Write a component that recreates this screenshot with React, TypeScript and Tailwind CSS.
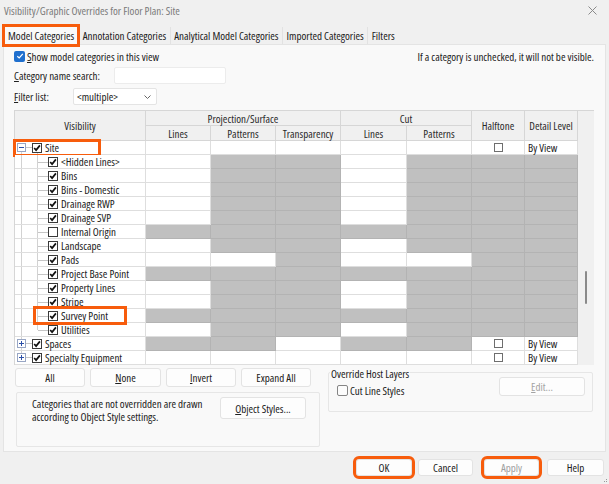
import React from "react";

type Row = {
  name: string;
  root: boolean;
  checked: boolean;
  plus?: boolean;
  cells: string;
  opts: boolean;
};

const rows: Row[] = [
  { name: "Site", root: true, checked: true, cells: "wwwww", opts: true },
  { name: "<Hidden Lines>", root: false, checked: true, cells: "wggwg", opts: false },
  { name: "Bins", root: false, checked: true, cells: "wggwg", opts: false },
  { name: "Bins - Domestic", root: false, checked: true, cells: "wggwg", opts: false },
  { name: "Drainage RWP", root: false, checked: true, cells: "wggwg", opts: false },
  { name: "Drainage SVP", root: false, checked: true, cells: "wggwg", opts: false },
  { name: "Internal Origin", root: false, checked: false, cells: "ggggg", opts: false },
  { name: "Landscape", root: false, checked: true, cells: "wggwg", opts: false },
  { name: "Pads", root: false, checked: true, cells: "wwgww", opts: false },
  { name: "Project Base Point", root: false, checked: true, cells: "ggggg", opts: false },
  { name: "Property Lines", root: false, checked: true, cells: "wggwg", opts: false },
  { name: "Stripe", root: false, checked: true, cells: "wggwg", opts: false },
  { name: "Survey Point", root: false, checked: true, cells: "ggggg", opts: false },
  { name: "Utilities", root: false, checked: true, cells: "wggwg", opts: false },
  { name: "Spaces", root: true, checked: true, plus: true, cells: "ggwgg", opts: true },
  { name: "Specialty Equipment", root: true, checked: true, plus: true, cells: "wwwww", opts: true },
];

const Box = ({ on }: { on: boolean }) => (
  <svg width="10" height="10" viewBox="0 0 10 10" className="shrink-0">
    <rect x="0.5" y="0.5" width="9" height="9" fill="#fff" stroke="#3a3a3a" />
    {on && <path d="M2.2 5 L4.1 7.1 L7.9 2.4" fill="none" stroke="#111" strokeWidth="1.7" />}
  </svg>
);

const Expander = ({ plus }: { plus?: boolean }) => (
  <svg width="9" height="9" viewBox="0 0 9 9" className="shrink-0">
    <rect x="0.5" y="0.5" width="8" height="8" fill="#fff" stroke="#98a6c4" />
    <path d="M2 4.5 H7" stroke="#2c50a8" />
    {plus && <path d="M4.5 2 V7" stroke="#2c50a8" />}
  </svg>
);

const VisCell = ({ row, i }: { row: Row; i: number }) => {
  const first = i === 0;
  const last = i === rows.length - 1;
  return (
    <div className="relative flex items-center bg-white border-r border-b border-[#dedede] whitespace-nowrap">
      <div
        className={`absolute left-[6px] w-px bg-[#d2d2d2] ${
          first ? "top-1/2 bottom-0" : last ? "top-0 h-1/2" : "top-0 bottom-0"
        }`}
      />
      {first && <div className="absolute left-[22px] top-[11px] bottom-0 w-px bg-[#d2d2d2]" />}
      {!row.root && (
        <>
          <div
            className={`absolute left-[22px] top-0 w-px bg-[#d2d2d2] ${
              row.name === "Utilities" ? "h-1/2" : "bottom-0"
            }`}
          />
          <div className="absolute left-[23px] top-1/2 h-px w-[10px] bg-[#c6c6c6]" />
        </>
      )}
      {row.root ? (
        <div className="relative flex items-center pl-[2px]">
          <Expander plus={row.plus} />
          <div className="w-[6px] h-px bg-[#c6c6c6]" />
          <Box on={row.checked} />
          <span className="ml-[3px]">{row.name}</span>
        </div>
      ) : (
        <div className="relative flex items-center pl-[33px]">
          <Box on={row.checked} />
          <span className="ml-[3px]">{row.name}</span>
        </div>
      )}
      {first && (
        <div className="absolute left-[-2px] top-[-2px] w-[88px] h-[18px] border-[3px] border-[#f75c0c]" />
      )}
      {row.name === "Survey Point" && (
        <div className="absolute left-[18px] top-[-3px] w-[94px] h-[19px] border-[3px] border-[#f75c0c] z-10" />
      )}
    </div>
  );
};

const DataCell = ({ g }: { g: boolean }) => (
  <div
    className={`border-r border-b ${g ? "bg-[#c0c0c0] border-[#b3b3b3]" : "bg-white border-[#dedede]"}`}
  />
);

const Head = ({ children, className = "" }: { children: React.ReactNode; className?: string }) => (
  <div
    className={`flex items-center justify-center bg-[#f0f0f0] border-r border-b border-[#d6d6d6] text-[#2a2a2a] whitespace-nowrap ${className}`}
  >
    {children}
  </div>
);

const Btn = ({ children, className = "" }: { children: React.ReactNode; className?: string }) => (
  <div
    className={`flex items-center justify-center rounded-[3px] bg-[#fdfdfd] border border-[#e3e3e3] ${className}`}
  >
    {children}
  </div>
);

export default function App() {
  return (
    <div className="w-[609px] h-[484px] bg-[#f0f0f0] flex flex-col overflow-hidden font-['Open_Sans',sans-serif] font-stretch-condensed text-[11px] leading-none text-[#202020] relative">
      {/* title bar */}
      <div className="h-[21px] flex items-center justify-between pl-[4px] pr-[12px] shrink-0">
        <span className="text-[#7a7a7a] text-[11px]">Visibility/Graphic Overrides for Floor Plan: Site</span>
        <svg width="9" height="9" viewBox="0 0 9 9">
          <path d="M0.5 0.5 L8.5 8.5 M8.5 0.5 L0.5 8.5" stroke="#8a8a8a" strokeWidth="1" />
        </svg>
      </div>

      {/* tabs */}
      <div className="mt-[6px] h-[17px] flex items-stretch pl-[5px] shrink-0">
        <div className="px-[3px] flex items-center bg-[#f9f9f9] outline-[3px] outline-[#f75c0c] z-10">
          Model Categories
        </div>
        <div className="ml-[2px] px-[3.5px] flex items-center border-r border-[#e2e2e2]">Annotation Categories</div>
        <div className="px-[3.5px] flex items-center border-r border-[#e2e2e2]">Analytical Model Categories</div>
        <div className="px-[3.5px] flex items-center border-r border-[#e2e2e2]">Imported Categories</div>
        <div className="px-[3.5px] flex items-center">Filters</div>
      </div>

      {/* panel */}
      <div className="mx-[3px] h-[408px] shrink-0 bg-[#f9f9f9] border border-[#e4e4e4] pl-[10px] pr-[11px] flex flex-col">
        <div className="mt-[5px] h-[12px] flex items-center justify-between">
          <div className="flex items-center">
            <div className="w-[11px] h-[11px] rounded-[2px] bg-[#1f6fce] flex items-center justify-center">
              <svg width="8" height="8" viewBox="0 0 8 8">
                <path d="M1.3 4.2 L3.2 6 L6.8 1.9" fill="none" stroke="#fff" strokeWidth="1.2" />
              </svg>
            </div>
            <span className="ml-[2px]">
              <span className="underline">S</span>how model categories in this view
            </span>
          </div>
          <span>If a category is unchecked, it will not be visible.</span>
        </div>

        <div className="mt-[5px] h-[17px] flex items-center">
          <span className="w-[100px]">
            <span className="underline">C</span>ategory name search:
          </span>
          <div className="w-[112px] h-[17px] bg-white border border-[#ececec] rounded-[2px]" />
        </div>

        <div className="mt-[4px] h-[17px] flex items-center">
          <span className="w-[59px]">
            <span className="underline">F</span>ilter list:
          </span>
          <div className="w-[84px] h-[17px] bg-white border border-[#e4e4e4] rounded-[2px] flex items-center justify-between pl-[3px] pr-[5px]">
            <span>&lt;multiple&gt;</span>
            <svg width="7" height="4" viewBox="0 0 7 4">
              <path d="M0.5 0.5 L3.5 3.5 L6.5 0.5" fill="none" stroke="#666" />
            </svg>
          </div>
        </div>

        {/* grid */}
        <div className="mt-[5px] flex w-[580px] border-t border-[#d6d6d6]">
          <div className="grid grid-cols-[131px_65px_65px_65px_66px_65px_53px_53px] grid-rows-[15px_15px_repeat(16,14px)] border-l border-[#d6d6d6] w-[564px]">
            <Head className="row-span-2">Visibility</Head>
            <Head className="col-span-3">Projection/Surface</Head>
            <Head className="col-span-2">Cut</Head>
            <Head className="row-span-2">Halftone</Head>
            <Head className="row-span-2">Detail Level</Head>
            <Head>Lines</Head>
            <Head>Patterns</Head>
            <Head>Transparency</Head>
            <Head>Lines</Head>
            <Head>Patterns</Head>
            {rows.map((row, i) => (
              <React.Fragment key={row.name}>
                <VisCell row={row} i={i} />
                {row.cells.split("").map((c, j) => (
                  <DataCell key={j} g={c === "g"} />
                ))}
                {row.opts ? (
                  <>
                    <div className="bg-white border-r border-b border-[#dedede] flex items-center justify-center">
                      <div className="w-[9px] h-[9px] border border-[#6e6e6e] bg-white" />
                    </div>
                    <div className="bg-white border-r border-b border-[#dedede] flex items-center pl-[3px] whitespace-nowrap">
                      By View
                    </div>
                  </>
                ) : (
                  <>
                    <DataCell g />
                    <DataCell g />
                  </>
                )}
              </React.Fragment>
            ))}
          </div>
          <div className="w-[16px] bg-[#f0f0f0] pt-[160px] pl-[7px]">
            <div className="w-[2px] h-[33px] bg-[#8a8a8a] rounded-full" />
          </div>
        </div>

        {/* lower controls */}
        <div className="mt-[3px] flex pl-[1px]">
          <div className="w-[305px] flex flex-col">
            <div className="flex gap-[5px]">
              <Btn className="w-[70px] h-[19px]">All</Btn>
              <Btn className="w-[71px] h-[19px]">
                <span className="underline">N</span>one
              </Btn>
              <Btn className="w-[70px] h-[19px]">
                <span className="underline">I</span>nvert
              </Btn>
              <Btn className="w-[70px] h-[19px]">Expand All</Btn>
            </div>
            <div className="mt-[5px] ml-[1px] h-[55px] border border-[#e6e6e6] rounded-[2px] flex items-start">
              <div className="pl-[15px] pt-[4px] w-[203px]">
                <div className="leading-[13px] whitespace-nowrap">Categories that are not overridden are drawn</div>
                <div className="leading-[13px] whitespace-nowrap">according to Object Style settings.</div>
              </div>
              <Btn className="mt-[4px] w-[86px] h-[22px]">
                <span className="underline">O</span>bject Styles...
              </Btn>
            </div>
          </div>
          <div className="ml-[8px] w-[265px] mt-[4px] h-[40px] border border-[#e6e6e6] rounded-[2px] flex">
            <div className="flex flex-col">
              <span className="-mt-[5px] ml-[1px] px-px bg-[#f9f9f9]">Override Host Layers</span>
              <div className="mt-[6px] ml-[8px] flex items-center">
                <div className="w-[11px] h-[11px] rounded-[2px] border border-[#858585] bg-[#fcfcfc]" />
                <span className="ml-[2px]">Cut Line Styles</span>
              </div>
            </div>
            <Btn className="ml-auto mr-[7px] mt-[4px] w-[86px] h-[19px] text-[#a3a3a3] bg-[#f7f7f7]">
              <span className="underline">E</span>dit...
            </Btn>
          </div>
        </div>
      </div>

      {/* bottom buttons */}
      <div className="flex-1 flex items-start justify-end pt-[7px] pr-[5px]">
        <Btn className="w-[56px] h-[17px] outline-[3px] outline-[#f75c0c]">OK</Btn>
        <Btn className="ml-[6px] w-[55px] h-[17px]">Cancel</Btn>
        <Btn className="ml-[11px] w-[55px] h-[17px] text-[#a0a0a0] outline-[3px] outline-[#f75c0c]">Apply</Btn>
        <Btn className="ml-[8px] w-[57px] h-[17px]">Help</Btn>
      </div>
      <div className="absolute right-[2px] bottom-[2px] grid grid-cols-3 gap-[1px]">
        <span />
        <span />
        <span className="w-px h-px bg-[#999]" />
        <span />
        <span className="w-px h-px bg-[#999]" />
        <span className="w-px h-px bg-[#999]" />
      </div>
    </div>
  );
}
